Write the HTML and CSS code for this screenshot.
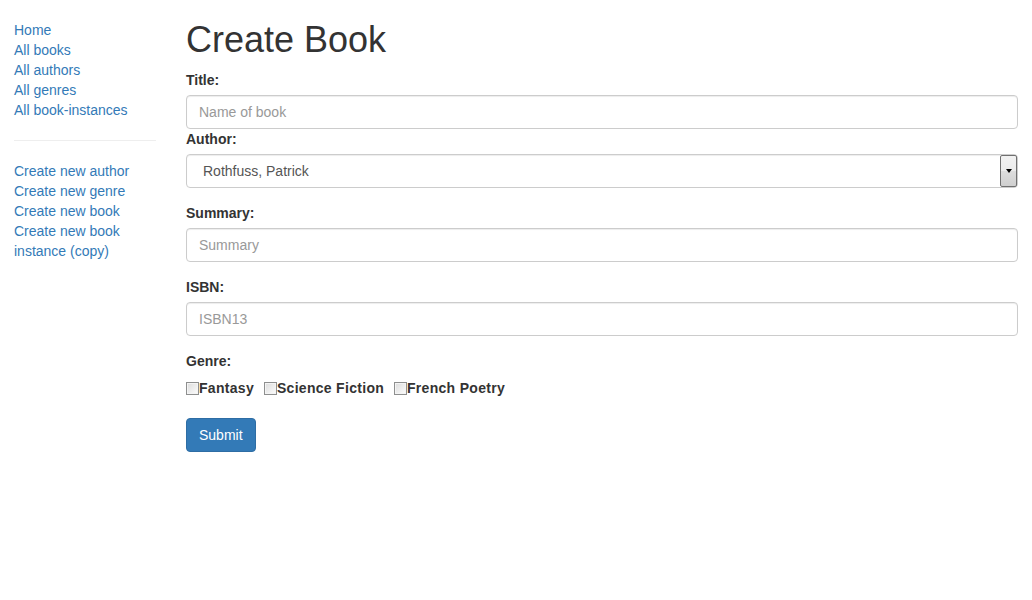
FILE: index.html
```html
<!DOCTYPE html>
<html lang="en">
<head>
<meta charset="utf-8">
<title>Create Book</title>
<link rel="stylesheet" href="styles.css">
</head>
<body>
<div class="page">
  <nav class="sidebar">
    <ul class="nav-list">
      <li><a href="#">Home</a></li>
      <li><a href="#">All books</a></li>
      <li><a href="#">All authors</a></li>
      <li><a href="#">All genres</a></li>
      <li><a href="#">All book-instances</a></li>
    </ul>
    <hr class="divider">
    <ul class="nav-list">
      <li><a href="#">Create new author</a></li>
      <li><a href="#">Create new genre</a></li>
      <li><a href="#">Create new book</a></li>
      <li><a href="#">Create new book instance (copy)</a></li>
    </ul>
  </nav>
  <main class="content">
    <h1 class="title">Create Book</h1>
    <form class="form">
      <div class="group">
        <label class="label" for="title">Title:</label>
        <input class="control" id="title" type="text" placeholder="Name of book">
        <label class="label" for="author">Author:</label>
        <div class="select-wrap">
          <select class="control select" id="author">
            <option>Rothfuss, Patrick</option>
          </select>
          <span class="select-btn"><span class="arrow"></span></span>
        </div>
      </div>
      <div class="group">
        <label class="label" for="summary">Summary:</label>
        <input class="control" id="summary" type="text" placeholder="Summary">
      </div>
      <div class="group">
        <label class="label" for="isbn">ISBN:</label>
        <input class="control" id="isbn" type="text" placeholder="ISBN13">
      </div>
      <div class="group genre-group">
        <label class="label">Genre:</label>
        <div class="checks">
          <span class="check"><input class="box" type="checkbox" id="g1"><label class="check-label" for="g1">Fantasy</label></span>
          <span class="check"><input class="box" type="checkbox" id="g2"><label class="check-label" for="g2">Science Fiction</label></span>
          <span class="check"><input class="box" type="checkbox" id="g3"><label class="check-label" for="g3">French Poetry</label></span>
        </div>
      </div>
      <button class="btn" type="submit">Submit</button>
    </form>
  </main>
</div>
</body>
</html>
```

FILE: styles.css
```css
html, body {
  margin: 0;
  padding: 0;
  background: #fff;
}

body {
  font-family: "Liberation Sans", Arial, Helvetica, sans-serif;
  font-size: 14px;
  line-height: 20px;
  color: #333;
}

.page {
  display: grid;
  grid-template-columns: 142px 1fr;
  column-gap: 30px;
  padding: 0 14px;
}

.sidebar {
  padding-top: 20px;
}

.nav-list {
  list-style: none;
  margin: 0;
  padding: 0;
}

.nav-list a {
  color: #337ab7;
  text-decoration: none;
}

.divider {
  margin: 20px 0;
  border: 0;
  border-top: 1px solid #eee;
  height: 0;
}

.title {
  font-size: 36px;
  font-weight: normal;
  line-height: 1.1;
  margin: 20px 0 10px;
  color: #333;
}

.form {
  margin: 0;
}

.group {
  margin-bottom: 15px;
}

.label {
  display: inline-block;
  font-weight: bold;
  margin-bottom: 5px;
}

.control {
  display: block;
  box-sizing: border-box;
  width: 100%;
  height: 34px;
  padding: 6px 12px;
  font-family: inherit;
  font-size: 14px;
  line-height: 20px;
  color: #555;
  background: #fff;
  border: 1px solid #ccc;
  border-radius: 4px;
  box-shadow: inset 0 1px 1px rgba(0, 0, 0, 0.075);
  margin: 0;
}

.control::placeholder {
  color: #999;
}

.select-wrap {
  position: relative;
}

.select {
  appearance: none;
  -webkit-appearance: none;
  padding-left: 16px;
  color: #555;
}

.select-btn {
  position: absolute;
  top: 1px;
  right: 1px;
  width: 17px;
  height: 32px;
  box-sizing: border-box;
  border: 1px solid #707070;
  border-radius: 2px;
  background: linear-gradient(#f2f2f2, #ebebeb 50%, #dddddd 51%, #cfcfcf);
  display: flex;
  align-items: center;
  justify-content: center;
  pointer-events: none;
}

.arrow {
  width: 0;
  height: 0;
  border-left: 3.5px solid transparent;
  border-right: 3.5px solid transparent;
  border-top: 4px solid #000;
}

.genre-group {
  margin-bottom: 20px;
}

.checks {
  line-height: 20px;
  padding-top: 2px;
}

.check {
  margin-right: 6px;
}

.box {
  appearance: none;
  -webkit-appearance: none;
  width: 13px;
  height: 13px;
  margin: 4px 0 0;
  box-sizing: border-box;
  border: 1px solid #8e8f8f;
  box-shadow: inset 0 0 0 1px #f4f4f4;
  background: linear-gradient(135deg, #dcdcdc, #fdfdfd);
  vertical-align: -2px;
}

.check-label {
  font-weight: bold;
  letter-spacing: 0.3px;
}

.btn {
  display: inline-block;
  font-family: inherit;
  font-size: 14px;
  line-height: 20px;
  padding: 6px 12px;
  color: #fff;
  background: #337ab7;
  border: 1px solid #2e6da4;
  border-radius: 4px;
  cursor: pointer;
  margin: 0;
}
```
